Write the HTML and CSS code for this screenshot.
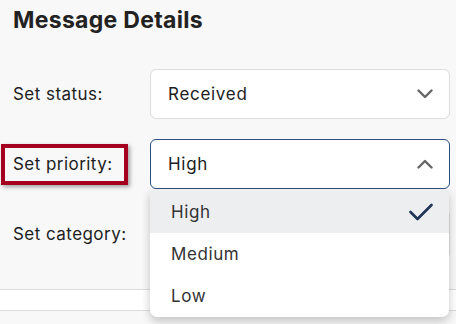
FILE: index.html
```html
<!DOCTYPE html>
<html>
<head>
<meta charset="utf-8">
<link rel="stylesheet" href="styles.css">
</head>
<body>
<div class="page">
  <h1 class="title">Message Details</h1>
  <div class="form">
    <div class="row">
      <label class="label">Set status:</label>
      <div class="field">
        <div class="select">
          <span class="value">Received</span>
          <svg class="chev" width="16" height="10" viewBox="0 0 16 10"><polyline points="1.5,1.5 8,8 14.5,1.5" fill="none" stroke="#666" stroke-width="2.4" stroke-linecap="round" stroke-linejoin="round"/></svg>
        </div>
      </div>
    </div>
    <div class="row">
      <label class="label annotated">Set priority:</label>
      <div class="field">
        <div class="select open">
          <span class="value">High</span>
          <svg class="chev" width="16" height="10" viewBox="0 0 16 10"><polyline points="1.5,8.5 8,2 14.5,8.5" fill="none" stroke="#666" stroke-width="2.4" stroke-linecap="round" stroke-linejoin="round"/></svg>
        </div>
        <ul class="menu">
          <li class="item selected"><span>High</span>
            <svg class="check" width="24" height="18" viewBox="0 0 24 18"><polyline points="1.5,9 8.5,16 22.5,2" fill="none" stroke="#1f3556" stroke-width="2.6" stroke-linecap="round" stroke-linejoin="round"/></svg>
          </li>
          <li class="item"><span>Medium</span></li>
          <li class="item"><span>Low</span></li>
        </ul>
      </div>
    </div>
    <div class="row">
      <label class="label">Set category:</label>
      <div class="field">
        <div class="select"></div>
      </div>
    </div>
  </div>
  <div class="strip"></div>
</div>
</body>
</html>
```
FILE: styles.css
```css
*, *::before, *::after { box-sizing: border-box; }
html, body { margin: 0; padding: 0; }
body {
  background: #f8f8f8;
  font-family: Inter, "Open Sans", sans-serif;
  color: #1c1c22;
  width: 456px;
  height: 324px;
  overflow: hidden;
}
.page {
  padding-top: 6px;
}
.title {
  margin: 0 0 0 13px;
  font-size: 23px;
  line-height: 28px;
  font-weight: 700;
  color: #222;
  letter-spacing: 0.3px;
}
.form {
  margin-top: 35px;
  display: flex;
  flex-direction: column;
  gap: 20px;
  padding: 0 6px 0 13px;
}
.row {
  display: flex;
  height: 50px;
}
.label {
  width: 137px;
  flex: none;
  display: flex;
  align-items: center;
  font-size: 17px;
  letter-spacing: 0.45px;
  color: #1c1c22;
}
.annotated { position: relative; }
.annotated::after {
  content: "";
  position: absolute;
  left: -12px;
  top: 5px;
  width: 127px;
  height: 41px;
  border: 4px solid #a5001f;
  box-shadow: 2px 2px 4px rgba(0,0,0,0.35);
}
.field {
  flex: 1;
  position: relative;
}
.select {
  height: 50px;
  background: #fff;
  border: 1px solid #dddddd;
  border-radius: 6px;
  display: flex;
  align-items: center;
  justify-content: space-between;
  padding: 0 16px 0 17px;
  font-size: 17px;
  letter-spacing: 0.7px;
  color: #1c1c22;
}
.select.open { border-color: #2d4f7c; }
.menu {
  position: absolute;
  top: 51px;
  left: 0;
  right: 1px;
  margin: 0;
  padding: 0;
  list-style: none;
  background: #fff;
  border-radius: 0 0 7px 7px;
  box-shadow: 0 4px 10px rgba(0,0,0,0.22);
  z-index: 2;
  overflow: hidden;
}
.item {
  height: 42px;
  display: flex;
  align-items: center;
  justify-content: space-between;
  padding: 0 16px 0 21px;
  font-size: 17px;
  letter-spacing: 0.6px;
  color: #333;
}
.item.selected { background: #edeef0; height: 43px; }
.strip {
  margin-top: 30px;
  height: 22px;
  background: #fff;
  border-top: 1px solid #dcdcdc;
  border-bottom: 1px solid #dcdcdc;
}
```
